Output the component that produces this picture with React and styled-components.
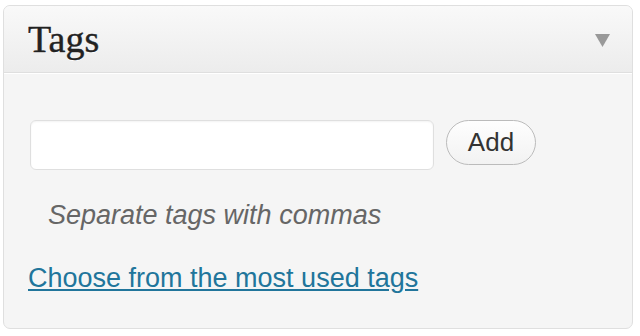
import React from 'react';
import styled, { createGlobalStyle } from 'styled-components';

const Global = createGlobalStyle`
  html, body {
    margin: 0;
    padding: 0;
    background: #ffffff;
  }
  body {
    font-family: "Liberation Sans", Arial, sans-serif;
  }
`;

const Page = styled.div`
  width: 640px;
  height: 336px;
  padding: 5px 7px 7px 3px;
  box-sizing: border-box;
`;

const Box = styled.div`
  height: 100%;
  box-sizing: border-box;
  border: 1px solid #dfdfdf;
  border-radius: 7px;
  background: #f5f5f5;
  overflow: hidden;
  display: flex;
  flex-direction: column;
`;

const Header = styled.div`
  height: 67px;
  box-sizing: border-box;
  display: flex;
  align-items: center;
  justify-content: space-between;
  padding: 0 22px 0 24px;
  background: linear-gradient(to bottom, #f9f9f9, #ececec);
  border-bottom: 1px solid #dfdfdf;
  box-shadow: 0 1px 0 #fff;
`;

const Title = styled.h3`
  margin: 0;
  font-family: "Liberation Serif", Georgia, serif;
  font-weight: normal;
  font-size: 38px;
  color: #222;
  text-shadow: 0 1px 0 #fff;
  -webkit-text-stroke: 0.4px #222;
`;

const Toggle = styled.svg`
  width: 15px;
  height: 15px;
  display: block;
`;

const Body = styled.div`
  flex: 1;
  padding: 47px 24px 0 26px;
  display: flex;
  flex-direction: column;
`;

const Row = styled.div`
  display: flex;
  align-items: center;
  gap: 12px;
`;

const Input = styled.input`
  width: 404px;
  height: 50px;
  box-sizing: border-box;
  border: 1px solid #dfdfdf;
  border-radius: 6px;
  background: #fff;
  box-shadow: inset 0 1px 2px rgba(0, 0, 0, 0.05);
  outline: none;
`;

const Button = styled.button`
  width: 90px;
  height: 45px;
  box-sizing: border-box;
  border: 1px solid #bbb;
  border-radius: 23px;
  background: linear-gradient(to bottom, #fefefe, #f2f2f2);
  font-family: "Liberation Sans", Arial, sans-serif;
  font-size: 26px;
  color: #333;
  padding: 0;
  margin-top: -5px;
`;

const Hint = styled.p`
  margin: 30px 0 0 18px;
  font-style: italic;
  font-size: 27px;
  color: #666;
`;

const Link = styled.a`
  margin-top: 32px;
  margin-left: -2px;
  font-size: 27px;
  color: #21759b;
  text-decoration: underline;
  align-self: flex-start;
`;

export default function App() {
  return (
    <Page>
      <Global />
      <Box>
        <Header>
          <Title>Tags</Title>
          <Toggle viewBox="0 0 15 15">
            <polygon points="0,2 15,2 7.5,15" fill="#999" />
          </Toggle>
        </Header>
        <Body>
          <Row>
            <Input type="text" />
            <Button>Add</Button>
          </Row>
          <Hint>Separate tags with commas</Hint>
          <Link href="#">Choose from the most used tags</Link>
        </Body>
      </Box>
    </Page>
  );
}
